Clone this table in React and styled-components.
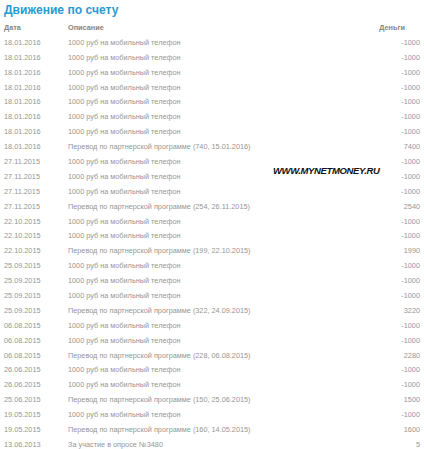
import React from "react";
import styled, { createGlobalStyle } from "styled-components";

const Global = createGlobalStyle`
  html, body { margin: 0; padding: 0; background: #fff; }
  body { font-family: "Liberation Sans", Arial, sans-serif; }
`;

const Page = styled.div`
  position: relative;
  width: 424px;
  height: 449px;
  overflow: hidden;
  box-sizing: border-box;
  padding: 1px 4px 0 4px;
`;

const Title = styled.h1`
  margin: 0;
  font-size: 12.1px;
  line-height: 19px;
  font-weight: bold;
  color: #2a9ad2;
`;

const Table = styled.div`
  margin-top: 1px;
  display: grid;
  grid-template-columns: 64px 1fr auto;
`;

const Row = styled.div`
  display: contents;
`;

const Cell = styled.div`
  height: 14.9px;
  line-height: 14.9px;
  font-size: 7.3px;
  white-space: nowrap;
  color: ${(p) => (p.$head ? "#858585" : "#969696")};
  font-weight: ${(p) => (p.$head ? "bold" : "normal")};
  text-align: ${(p) => (p.$right ? "right" : "left")};
  padding-right: ${(p) => (p.$head && p.$right ? "15px" : "0")};
`;

const Watermark = styled.div`
  position: absolute;
  left: 273px;
  top: 165px;
  font-size: 9.5px;
  font-weight: bold;
  font-style: italic;
  color: #111;
  letter-spacing: -0.35px;
`;

const M = "1000 руб на мобильный телефон";
const P = (n, d) => `Перевод по партнерской программе (${n}, ${d})`;

const rows = [
  ["18.01.2016", M, "-1000"],
  ["18.01.2016", M, "-1000"],
  ["18.01.2016", M, "-1000"],
  ["18.01.2016", M, "-1000"],
  ["18.01.2016", M, "-1000"],
  ["18.01.2016", M, "-1000"],
  ["18.01.2016", M, "-1000"],
  ["18.01.2016", P(740, "15.01.2016"), "7400"],
  ["27.11.2015", M, "-1000"],
  ["27.11.2015", M, "-1000"],
  ["27.11.2015", M, "-1000"],
  ["27.11.2015", P(254, "26.11.2015"), "2540"],
  ["22.10.2015", M, "-1000"],
  ["22.10.2015", M, "-1000"],
  ["22.10.2015", P(199, "22.10.2015"), "1990"],
  ["25.09.2015", M, "-1000"],
  ["25.09.2015", M, "-1000"],
  ["25.09.2015", M, "-1000"],
  ["25.09.2015", P(322, "24.09.2015"), "3220"],
  ["06.08.2015", M, "-1000"],
  ["06.08.2015", M, "-1000"],
  ["06.08.2015", P(228, "06.08.2015"), "2280"],
  ["26.06.2015", M, "-1000"],
  ["26.06.2015", M, "-1000"],
  ["25.06.2015", P(150, "25.06.2015"), "1500"],
  ["19.05.2015", M, "-1000"],
  ["19.05.2015", P(160, "14.05.2015"), "1600"],
  ["13.06.2013", "За участие в опросе №3480", "5"],
];

export default function App() {
  return (
    <Page>
      <Global />
      <Title>Движение по счету</Title>
      <Table>
        <Row>
          <Cell $head>Дата</Cell>
          <Cell $head>Описание</Cell>
          <Cell $head $right>Деньги</Cell>
        </Row>
        {rows.map((r, i) => (
          <Row key={i}>
            <Cell>{r[0]}</Cell>
            <Cell>{r[1]}</Cell>
            <Cell $right>{r[2]}</Cell>
          </Row>
        ))}
      </Table>
      <Watermark>WWW.MYNETMONEY.RU</Watermark>
    </Page>
  );
}
